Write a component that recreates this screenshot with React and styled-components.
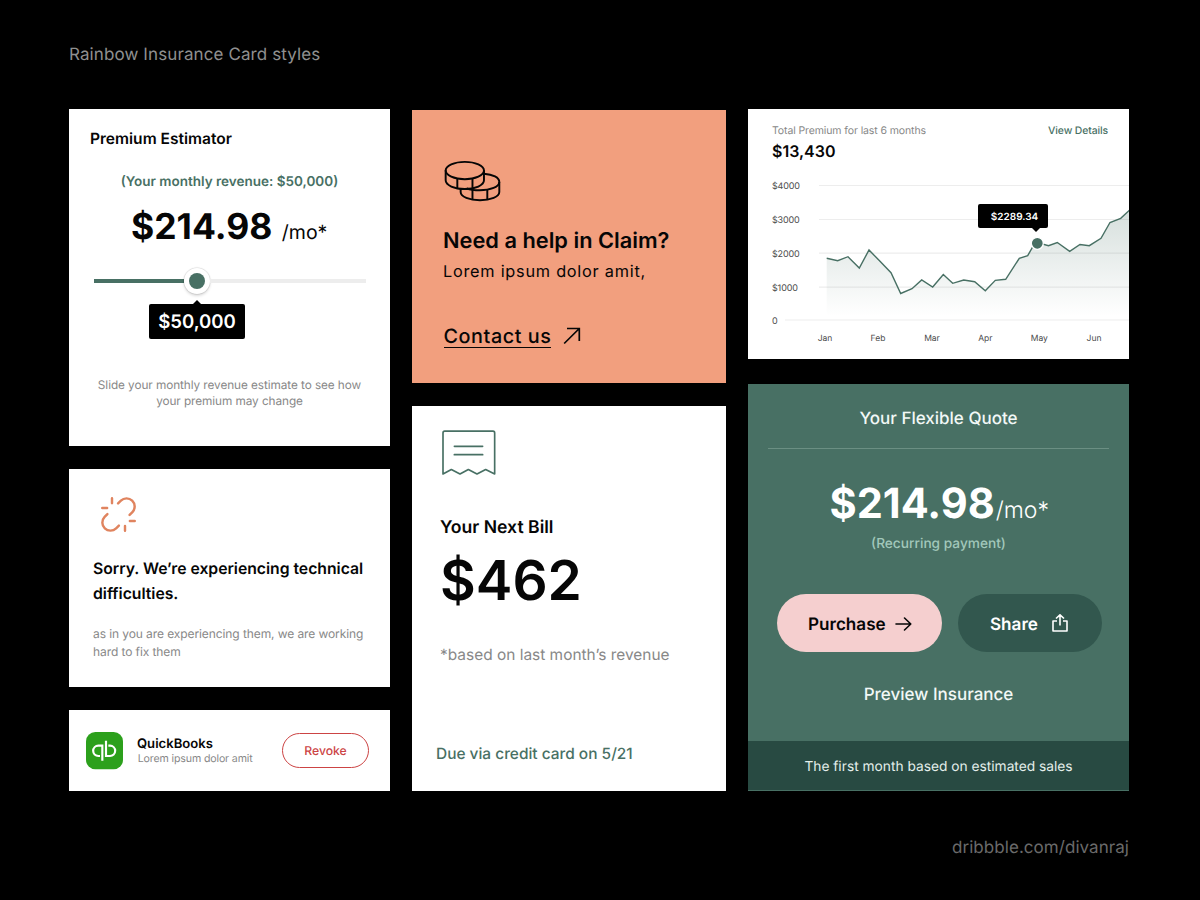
import React from "react";
import styled, { createGlobalStyle } from "styled-components";

const color = {
  green: "#487064",
  greenDark: "#284a42",
  greenButton: "#32574e",
  orange: "#f29f7e",
  orangeDark: "#e0845f",
  pink: "#f5cfcf",
  grey: "#888888",
  red: "#cc4444",
};

const GlobalStyle = createGlobalStyle`
  * { box-sizing: border-box; }
  body {
    margin: 0;
    background: #000;
    font-family: Inter, "Liberation Sans", sans-serif;
    color: #060606;
    text-rendering: geometricPrecision;
  }
  button { text-rendering: inherit; }
  svg { display: block; flex: none; }
`;

const Page = styled.main`
  width: 1200px;
  height: 900px;
  padding: 45px 71px 0 69px;
  background: #000;
  overflow: hidden;
`;

const Text = styled.div`
  font-size: ${(p) => p.$size}px;
  line-height: ${(p) => p.$line}px;
  font-weight: ${(p) => p.$weight || 400};
  letter-spacing: ${(p) => p.$track || 0}px;
  color: ${(p) => p.$color || "inherit"};
  margin-top: ${(p) => p.$top || 0}px;
  margin-left: ${(p) => p.$indent || 0}px;
  text-align: ${(p) => p.$align || "left"};
  white-space: nowrap;
`;

const Board = styled.div`
  display: flex;
  margin-top: 44px;
  height: 682px;
`;

const Column = styled.div`
  display: flex;
  flex-direction: column;
  width: ${(p) => p.$width}px;
  margin-left: ${(p) => p.$gap || 0}px;
  padding-top: ${(p) => p.$top || 0}px;
`;

const Card = styled.section`
  display: flex;
  flex-direction: column;
  height: ${(p) => p.$height}px;
  margin-top: ${(p) => p.$gap || 0}px;
  padding: ${(p) => p.$pad};
  background: ${(p) => p.$bg || "#fff"};
  overflow: hidden;
`;

const PriceRow = styled.div`
  display: flex;
  align-items: baseline;
  margin-top: ${(p) => p.$top}px;
  margin-left: ${(p) => p.$indent}px;
  height: ${(p) => p.$height}px;
`;

const Slider = styled.div`
  position: relative;
  display: flex;
  align-items: center;
  height: 26px;
  margin: 19px 3px 0 4px;
`;

const TrackFill = styled.div`
  width: 90.4px;
  height: 4px;
  background: ${color.green};
`;

const TrackRest = styled.div`
  flex: 1;
  height: 4px;
  background: #ededed;
`;

const Thumb = styled.div`
  display: flex;
  align-items: center;
  justify-content: center;
  width: 26px;
  height: 26px;
  border-radius: 50%;
  background: #fff;
  box-shadow: 0 0 1px 0.5px rgba(0, 0, 0, 0.16), 0 2px 3px rgba(0, 0, 0, 0.14);
  &::after {
    content: "";
    width: 16px;
    height: 16px;
    border-radius: 50%;
    background: ${color.green};
  }
`;

const Tooltip = styled.div`
  position: absolute;
  left: ${(p) => p.$x}px;
  top: ${(p) => p.$y}px;
  width: ${(p) => p.$w}px;
  height: ${(p) => p.$h}px;
  border-radius: 2px;
  background: #000;
  color: #fff;
  text-align: center;
  padding-left: ${(p) => p.$nudge || 0}px;
  font-weight: 600;
  font-size: ${(p) => p.$size}px;
  line-height: ${(p) => p.$line}px;
  &::after {
    content: "";
    position: absolute;
    left: ${(p) => p.$tip - 5}px;
    ${(p) => (p.$up ? "top: -4.5px;" : "bottom: -4px;")}
    border: 5px solid transparent;
    border-${(p) => (p.$up ? "bottom" : "top")}-color: #000;
    border-${(p) => (p.$up ? "top" : "bottom")}-width: 0;
  }
`;

const IconSlot = styled.div`
  margin-top: ${(p) => p.$top}px;
  margin-left: ${(p) => p.$left}px;
`;

const Integration = styled.div`
  display: flex;
  align-items: flex-start;
`;

const IntegrationInfo = styled.div`
  flex: 1;
  padding: 3px 0 0 14px;
`;

const RevokeButton = styled.button`
  width: 87px;
  height: 35px;
  margin-top: 1px;
  padding: 0;
  border: 1px solid ${color.red};
  border-radius: 18px;
  background: #fff;
  color: ${color.red};
  font: 500 12.2px Inter, sans-serif;
`;

const ContactRow = styled.div`
  display: flex;
  align-items: flex-start;
  gap: 12px;
  margin-top: 42px;
`;

const ContactLink = styled.a`
  height: 25px;
  margin-left: 0.5px;
  border-bottom: 1.5px solid #060606;
  font-size: 19.8px;
  line-height: 26px;
  letter-spacing: 0.55px;
  font-weight: 450;
`;

const ChartHead = styled.div`
  display: flex;
  justify-content: space-between;
  padding: 14px 21px 0 24px;
`;

const ChartBody = styled.div`
  position: relative;
`;

const Divider = styled.hr`
  width: 341px;
  height: 1px;
  margin: 17px auto 0;
  border: 0;
  background: #6b8f83;
`;

const Actions = styled.div`
  display: flex;
  gap: 16px;
  margin: 41px 27px 0 29px;
`;

const PillButton = styled.button`
  display: flex;
  align-items: center;
  width: ${(p) => p.$width}px;
  height: 58px;
  padding: 2px 0 0 ${(p) => p.$pad}px;
  gap: ${(p) => p.$gap}px;
  border: 0;
  border-radius: 29px;
  background: ${(p) => p.$bg};
  color: ${(p) => p.$fg};
  font: 600 17.1px Inter, sans-serif;
`;

const QuoteFooter = styled.div`
  margin-top: auto;
  height: 50px;
  border-bottom: 1px solid ${color.green};
  background: ${color.greenDark};
  color: #e4efeb;
  text-align: center;
  font-size: 13.75px;
  line-height: 52px;
`;

const Signature = styled.footer`
  margin-top: 47px;
  text-align: right;
  font-size: 17px;
  line-height: 20px;
  letter-spacing: 0.05px;
  color: #6a6a6a;
`;

const UnlinkIcon = () => (
  <svg width="39" height="39" viewBox="0 0 24 24" fill="none" stroke={color.orangeDark} strokeWidth="1.5" strokeLinecap="round" strokeLinejoin="round">
    <path d="m18.84 12.25 1.72-1.71h-.02a5.004 5.004 0 0 0-.12-7.07 5.006 5.006 0 0 0-6.95 0l-1.72 1.71" />
    <path d="m5.17 11.75-1.71 1.71a5.004 5.004 0 0 0 .12 7.07 5.006 5.006 0 0 0 6.95 0l1.71-1.71" />
    <path d="M8 2v3M2 8h3M16 19v3M19 16h3" />
  </svg>
);

const QuickBooksLogo = () => (
  <svg width="37" height="38" viewBox="78 97 111 114">
    <rect x="78" y="97" width="111" height="112" rx="28" fill="#2ca01c" />
    <g fill="none" stroke="#fff" strokeWidth="6.5">
      <path d="M127 183V138H115a15.500 15.500 0 0 0 0 31h5" />
      <path d="M138 123V169H150a15.500 15.500 0 0 0 0-31h-5" />
    </g>
  </svg>
);

const CoinsIcon = () => (
  <svg width="57.300" height="42" viewBox="118 180 172 126" fill="none" stroke="#060606" strokeWidth="5.800">
    <ellipse cx="180.500" cy="211.500" rx="57.500" ry="26" />
    <path d="M123 211V241C123 256 149 267 180.500 267S238 256 238 241V211" />
    <path d="M238 221C265 223 284 233 284 246C284 260 258 271 225 271C210 271 196 269 186 265" />
    <path d="M168 264V276C168 290 194 301 226 301S284 290 284 276V246" />
    <path d="M158 236V264M203.500 236V264M203.500 269V298M248 268V298" />
  </svg>
);

const ReceiptIcon = () => (
  <svg width="56" height="47" viewBox="110 103 168 141" fill="none" stroke={color.green} strokeWidth="5" strokeLinejoin="round" strokeLinecap="round">
    <path d="M116 238V115Q116 109.500 121 109.500H266Q271 109.500 271 115V238L244 224.500L218 238L192 224.500L167 238L141 224.500Z" />
    <path d="M150 155H235M150 180H235" />
  </svg>
);

const ArrowSlot = styled.span`
  margin-top: 3px;
`;

const DiagonalArrow = () => (
  <svg width="18" height="19" viewBox="0 0 18 19" fill="none" stroke="#060606" strokeWidth="1.700">
    <path d="M1.200 17.500L16.300 2.500M4 2.500H16.300V15" />
  </svg>
);

const RightArrow = () => (
  <svg width="17" height="16" viewBox="0 0 17 16" fill="none" stroke="#060606" strokeWidth="1.600" strokeLinecap="round" strokeLinejoin="round">
    <path d="M1 8H15.800M9.500 2L15.800 8L9.500 14" />
  </svg>
);

const ShareIcon = () => (
  <svg width="16" height="20" viewBox="0 0 16 20" fill="none" stroke="#fff" strokeWidth="1.600" strokeLinejoin="round">
    <path d="M5 7H1V17H15V7H11M8 11.500V1M4 4.500L8 0.800L12 4.500" />
  </svg>
);

const linePoints = [
  [78.7, 97.3], [89.7, 99.7], [100, 95.7], [111.3, 107], [121, 89], [132, 100.3],
  [143, 111.7], [152.7, 132.5], [164, 127.7], [173.7, 119], [184.7, 126], [195.3, 113.5],
  [204.7, 122.3], [215.7, 119], [226.7, 120.7], [237.3, 129.7], [247.3, 119.3],
  [257.7, 118.3], [271.3, 97.3], [279.7, 94.7], [287.5, 81], [300.5, 84.7], [309.3, 81.5],
  [321.7, 90.3], [332, 83.5], [341.3, 84.7], [353, 77.3], [362, 61.5], [372.7, 57.3], [382, 48.7],
].map((p) => p.join(",")).join(" ");

const gridRows = [
  { label: "$4000", y: 24.5, from: 71 },
  { label: "$3000", y: 58.5, from: 71 },
  { label: "$2000", y: 92.2, from: 71 },
  { label: "$1000", y: 126.2, from: 71 },
  { label: "0", y: 159, from: 37 },
];

const months = [["Jan", 77], ["Feb", 130], ["Mar", 184], ["Apr", 237.3], ["May", 291.3], ["Jun", 346]];

const PremiumChart = () => (
  <svg width="381" height="198" viewBox="0 0 381 198" fontFamily="Inter, sans-serif" fill="#4c4c4c">
    <defs>
      <linearGradient id="area" x1="0" y1="50" x2="0" y2="155" gradientUnits="userSpaceOnUse">
        <stop offset="0" stopColor={color.green} stopOpacity="0.22" />
        <stop offset="1" stopColor={color.green} stopOpacity="0" />
      </linearGradient>
    </defs>
    {gridRows.map((r) => (
      <g key={r.label}>
        <text x="24" y={r.y + 3.6} fontSize="9" letterSpacing="-0.150">{r.label}</text>
        <path d={`M${r.from} ${r.y}H381`} stroke="#ededed" strokeWidth="1.200" />
      </g>
    ))}
    <polygon points={`78.7,159 ${linePoints} 382,159`} fill="url(#area)" />
    <polyline points={linePoints} fill="none" stroke={color.green} strokeWidth="1.400" />
    <circle cx="289.300" cy="82.300" r="6" fill={color.green} stroke="#fff" strokeWidth="1.300" />
    {months.map(([m, x]) => (
      <text key={m} x={x} y="180.300" fontSize="8.500" textAnchor="middle">{m}</text>
    ))}
  </svg>
);

export default function App() {
  return (
    <Page>
      <GlobalStyle />
      <Text as="h1" $size={17} $line={20} $track={0.1} $color="#8f8f8f">Rainbow Insurance Card styles</Text>
      <Board>
        <Column $width={321}>
          <Card $height={337} $pad="20px 21px 0">
            <Text $size={15.55} $line={20} $weight={600}>Premium Estimator</Text>
            <Text $size={13.5} $line={20} $weight={600} $top={23} $align="center" $color={color.green}>(Your monthly revenue: $50,000)</Text>
            <PriceRow $top={13} $height={44} $indent={41}>
              <Text $size={35.5} $line={44} $weight={700}>$214.98</Text>
              <Text $size={19.5} $line={24} $indent={9.5}>/mo*</Text>
            </PriceRow>
            <Slider>
              <TrackFill />
              <Thumb />
              <TrackRest />
              <Tooltip $x={55} $y={36} $w={96} $h={35} $line={37} $size={18.6} $tip={48} $up>$50,000</Tooltip>
            </Slider>
            <Text $size={11.8} $line={16} $track={-0.08} $top={83} $align="center" $color={color.grey}>
              Slide your monthly revenue estimate to see how<br />your premium may change
            </Text>
          </Card>
          <Card $height={218} $gap={23} $pad="0 24px">
            <IconSlot $top={26} $left={5.7}><UnlinkIcon /></IconSlot>
            <Text $size={15.75} $line={25} $weight={600} $top={22} $track={-0.02}>Sorry. We’re experiencing technical<br />difficulties.</Text>
            <Text $size={12} $line={18} $top={19} $track={-0.09} $color={color.grey}>as in you are experiencing them, we are working<br />hard to fix them</Text>
          </Card>
          <Card $height={81} $gap={23} $pad="22px 21px 0 17px">
            <Integration>
              <QuickBooksLogo />
              <IntegrationInfo>
                <Text $size={13.1} $line={18} $weight={600}>QuickBooks</Text>
                <Text $size={10.6} $line={14} $top={-1} $track={-0.13} $indent={0.7} $color={color.grey}>Lorem ipsum dolor amit</Text>
              </IntegrationInfo>
              <RevokeButton>Revoke</RevokeButton>
            </Integration>
          </Card>
        </Column>

        <Column $width={314} $gap={22} $top={1}>
          <Card $height={273} $bg={color.orange} $pad="0 31px">
            <IconSlot $top={50} $left={1.3}><CoinsIcon /></IconSlot>
            <Text $size={21.8} $line={28} $weight={600} $top={25}>Need a help in Claim?</Text>
            <Text $size={16.3} $line={20} $top={6} $track={0.75}>Lorem ipsum dolor amit,</Text>
            <ContactRow>
              <ContactLink>Contact us</ContactLink>
              <ArrowSlot><DiagonalArrow /></ArrowSlot>
            </ContactRow>
          </Card>
          <Card $height={385} $gap={23} $pad="0 24px">
            <IconSlot $top={23} $left={5}><ReceiptIcon /></IconSlot>
            <Text $size={17.6} $line={24} $weight={600} $top={40} $indent={4}>Your Next Bill</Text>
            <Text $size={55} $line={66} $weight={600} $top={8} $indent={4}>$462</Text>
            <Text $size={15.45} $line={20} $top={31} $indent={4} $color={color.grey}>*based on last month’s revenue</Text>
            <Text $size={15.45} $line={20} $weight={500} $top={79} $color={color.green}>Due via credit card on 5/21</Text>
          </Card>
        </Column>

        <Column $width={381} $gap={22}>
          <Card $height={250} $pad="0">
            <ChartHead>
              <Text $size={10.5} $line={16} $track={-0.11} $color={color.grey}>Total Premium for last 6 months</Text>
              <Text $size={10.4} $line={16} $track={-0.11} $weight={500} $color={color.green}>View Details</Text>
            </ChartHead>
            <Text $size={16} $line={20} $weight={600} $top={2} $indent={24}>$13,430</Text>
            <ChartBody>
              <PremiumChart />
              <Tooltip $x={230} $y={43} $w={70} $h={24} $line={26} $size={10} $tip={57.5} $nudge={3}>$2289.34</Tooltip>
            </ChartBody>
          </Card>
          <Card $height={407} $gap={25} $bg={color.green} $pad="0">
            <Text $size={17} $line={24} $weight={500} $top={23} $align="center" $color="#f2f8f6">Your Flexible Quote</Text>
            <Divider />
            <PriceRow $top={30} $height={50} $indent={81.5}>
              <Text $size={41.5} $line={50} $weight={700} $color="#fff">$214.98</Text>
              <Text $size={23} $line={28} $weight={300} $color="#fff" $indent={1}>/mo*</Text>
            </PriceRow>
            <Text $size={13.7} $line={18} $weight={500} $top={6} $align="center" $color="#a2c8bb">(Recurring payment)</Text>
            <Actions>
              <PillButton $width={165} $pad={31} $gap={9} $bg={color.pink} $fg="#060606">Purchase<RightArrow /></PillButton>
              <PillButton $width={144} $pad={32} $gap={14} $bg={color.greenButton} $fg="#fff">Share<ShareIcon /></PillButton>
            </Actions>
            <Text $size={17} $line={24} $weight={500} $top={31} $align="center" $color="#f2f8f6">Preview Insurance</Text>
            <QuoteFooter>The first month based on estimated sales</QuoteFooter>
          </Card>
        </Column>
      </Board>
      <Signature>dribbble.com/divanraj</Signature>
    </Page>
  );
}
